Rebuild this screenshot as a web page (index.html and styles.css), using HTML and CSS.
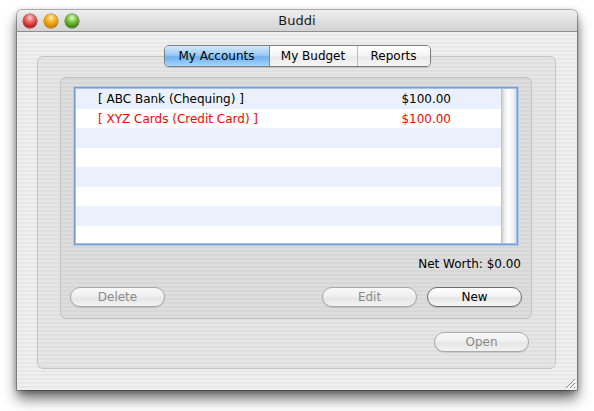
FILE: index.html
```html
<!DOCTYPE html>
<html>
<head>
<meta charset="utf-8">
<title>Buddi</title>
<link rel="stylesheet" href="styles.css">
</head>
<body>
<div class="window">
  <div class="titlebar">
    <div class="lights">
      <span class="light red"></span>
      <span class="light yellow"></span>
      <span class="light green"></span>
    </div>
    <div class="title">Buddi</div>
  </div>
  <div class="content">
    <div class="tabpanel">
      <div class="tabs">
        <div class="tab selected">My Accounts</div>
        <div class="tab">My Budget</div>
        <div class="tab">Reports</div>
      </div>
      <div class="groupbox">
        <div class="innerbox">
          <div class="list">
            <div class="rows">
              <div class="row alt"><span class="name">[ ABC Bank (Chequing) ]</span><span class="amount">$100.00</span></div>
              <div class="row credit"><span class="name">[ XYZ Cards (Credit Card) ]</span><span class="amount">$100.00</span></div>
              <div class="row alt"></div>
              <div class="row"></div>
              <div class="row alt"></div>
              <div class="row"></div>
              <div class="row alt"></div>
              <div class="row"></div>
            </div>
            <div class="scrolltrack"></div>
          </div>
          <div class="networth">Net Worth: $0.00</div>
          <div class="buttonrow">
            <button class="btn disabled">Delete</button>
            <div class="spacer"></div>
            <button class="btn disabled">Edit</button>
            <button class="btn">New</button>
          </div>
        </div>
        <div class="openrow">
          <button class="btn disabled">Open</button>
        </div>
      </div>
    </div>
    <div class="grip">
      <svg width="12" height="12" viewBox="0 0 12 12">
        <path d="M11 2 L2 11 M11 6 L6 11 M11 10 L10 11" stroke="#8c8c8c" stroke-width="1"/>
        <path d="M12 3 L3 12 M12 7 L7 12" stroke="#ffffff" stroke-width="1"/>
      </svg>
    </div>
  </div>
</div>
</body>
</html>
```
FILE: styles.css
```css
* { box-sizing: border-box; }
html, body { margin: 0; padding: 0; background: #ffffff; }
body {
  font-family: "DejaVu Sans", "Liberation Sans", sans-serif;
  font-size: 12px;
  color: #000;
  width: 594px;
  height: 411px;
  overflow: hidden;
}
.window {
  margin: 10px 0 0 17px;
  width: 560px;
  height: 380px;
  border-radius: 5px 5px 0 0;
  box-shadow: 0 0 0 1px rgba(0,0,0,0.25), 0 9px 14px rgba(0,0,0,0.55), 0 2px 6px rgba(0,0,0,0.3);
  display: flex;
  flex-direction: column;
  overflow: hidden;
}
.titlebar {
  height: 22px;
  flex: none;
  background: linear-gradient(to bottom, #eeeeee 0%, #e0e0e0 50%, #d2d2d2 100%);
  border-bottom: 1px solid #8e8e8e;
  border-radius: 5px 5px 0 0;
  display: flex;
  align-items: center;
  position: relative;
}
.lights {
  display: flex;
  gap: 7px;
  padding-left: 6px;
  padding-top: 1px;
}
.light {
  width: 14px;
  height: 14px;
  border-radius: 50%;
  display: block;
}
.red {
  background: radial-gradient(circle at 50% 28%, #ffd6d6 0, #f08a8a 22%, #d43b3b 55%, #b81818 80%, #d86a6a 100%);
  box-shadow: 0 0 0 0.5px #7a2020;
}
.yellow {
  background: radial-gradient(circle at 50% 28%, #fff2c8 0, #fcc54a 22%, #e89a00 55%, #c87a00 80%, #f0b040 100%);
  box-shadow: 0 0 0 0.5px #8a5a00;
}
.green {
  background: radial-gradient(circle at 50% 28%, #e4ffd6 0, #9ede6a 22%, #5ea22a 55%, #3e7e10 80%, #80c050 100%);
  box-shadow: 0 0 0 0.5px #2e5e10;
}
.title {
  position: absolute;
  left: 0;
  right: 0;
  text-align: center;
  font-size: 13px;
  color: #1a1a1a;
  pointer-events: none;
}
.content {
  flex: 1;
  position: relative;
  background: repeating-linear-gradient(to bottom, #efefef 0, #efefef 2px, #e8e8e8 2px, #e8e8e8 4px);
  padding: 13px 21px 0 20px;
}
.tabpanel {
  display: flex;
  flex-direction: column;
  align-items: center;
}
.tabs {
  display: flex;
  height: 22px;
  border: 1px solid #7d7d7d;
  border-radius: 5px;
  overflow: hidden;
  position: relative;
  z-index: 1;
  box-shadow: 0 1px 1px rgba(0,0,0,0.15);
  margin-left: 1px;
}
.tab {
  display: flex;
  align-items: center;
  justify-content: center;
  height: 100%;
  background: linear-gradient(to bottom, #ffffff 0%, #f6f6f6 45%, #e9e9e9 55%, #f6f6f6 100%);
  border-left: 1px solid #bdbdbd;
  color: #000;
}
.tab:first-child { border-left: none; width: 105px; }
.tab:nth-child(2) { width: 87px; }
.tab:nth-child(3) { width: 73px; }
.tab.selected {
  background: linear-gradient(to bottom, #d4e9fd 0%, #9ccbf6 45%, #6eb0ef 55%, #a6d6fb 100%);
  border-right: 1px solid #6a8fb8;
}
.tab.selected + .tab { border-left: none; }
.groupbox {
  align-self: stretch;
  margin-top: -11px;
  height: 313px;
  border: 1px solid #c4c4c4;
  border-radius: 6px;
  background: rgba(0,0,0,0.035);
  padding: 20px 23px 0 22px;
  display: flex;
  flex-direction: column;
}
.innerbox {
  height: 242px;
  border: 1px solid #c2c2c2;
  border-radius: 6px;
  background: rgba(0,0,0,0.035);
  padding: 9px 9px 0 9px;
  display: flex;
  flex-direction: column;
}
.list {
  margin: 0 4px;
  height: 158px;
  display: flex;
  border: 1px solid #7a9cc8;
  box-shadow: 0 0 0 1px #b3cdee, inset 0 0 0 1px #a3c0e6;
  background: #fff;
  padding: 1px;
}
.rows {
  flex: 1;
  display: flex;
  flex-direction: column;
  overflow: hidden;
}
.row {
  height: 19.5px;
  flex: none;
  display: flex;
  align-items: center;
  padding-left: 22px;
  padding-right: 50px;
  padding-top: 1px;
  background: #ffffff;
}
.row.alt { background: #eaf1fc; }
.row .name { flex: 1; }
.row .amount { text-align: right; }
.row.credit { color: #ff0000; }
.scrolltrack {
  width: 15px;
  flex: none;
  background: linear-gradient(to right, #bdbdbd 0, #dcdcdc 2px, #f6f6f6 5px, #ffffff 8px, #eeeeee 13px, #dadada 15px);
}
.networth {
  text-align: right;
  padding-right: 1px;
  margin-top: 11px;
  height: 16px;
  line-height: 16px;
}
.buttonrow {
  display: flex;
  gap: 10px;
  margin-top: 15px;
}
.spacer { flex: 1; }
.btn {
  width: 95px;
  height: 20px;
  border-radius: 10px;
  border: 1px solid #6e6e6e;
  background: linear-gradient(to bottom, #ffffff 0%, #f4f4f4 45%, #e4e4e4 55%, #f8f8f8 100%);
  font-family: "DejaVu Sans", "Liberation Sans", sans-serif;
  font-size: 12px;
  color: #000;
  padding: 0;
  box-shadow: 0 1px 1px rgba(0,0,0,0.12);
}
.btn.disabled {
  border-color: #a9a9a9;
  color: #8a8a8a;
  background: linear-gradient(to bottom, #f8f8f8 0%, #f0f0f0 45%, #e6e6e6 55%, #f2f2f2 100%);
}
.openrow {
  display: flex;
  justify-content: flex-end;
  margin-top: 13px;
  padding-right: 3px;
}
.grip {
  position: absolute;
  right: 1px;
  bottom: 1px;
  width: 12px;
  height: 12px;
}
.grip svg { display: block; }
```
